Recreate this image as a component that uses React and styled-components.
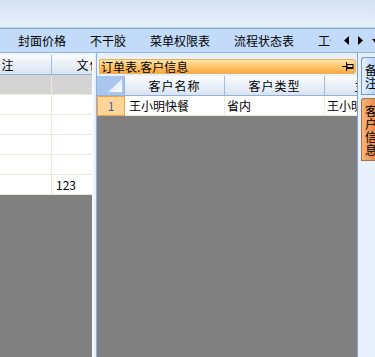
import React from 'react';
import styled, { createGlobalStyle } from 'styled-components';

const GlobalStyle = createGlobalStyle`
  html, body {
    margin: 0;
    padding: 0;
    background: #e8f0fc;
  }
  body {
    font-family: "Noto Sans CJK SC", "Liberation Sans", sans-serif;
    font-size: 12px;
    color: #000;
  }
`;

const Frame = styled.div`
  width: 375px;
  height: 357px;
  overflow: hidden;
  display: flex;
  flex-direction: column;
  background: #e8f0fc;
`;

const TitleArea = styled.div`
  height: 27px;
  flex: none;
  background: linear-gradient(to bottom, #d4e2f3, #e6f0fc);
  border-bottom: 1px solid #b4def0;
`;

const TabBar = styled.div`
  height: 23px;
  flex: none;
  display: flex;
  align-items: center;
  background: #c2dbf9;
  border-top: 1px solid #8ea8c8;
  border-bottom: 1px solid #93b2da;
`;

const TabList = styled.div`
  flex: 1;
  display: flex;
  overflow: hidden;
  white-space: nowrap;
  padding-left: 6px;
  min-width: 0;
`;

const Tab = styled.div`
  flex: none;
  padding: 0 12px;
  line-height: 23px;
`;

const TabArrows = styled.div`
  flex: none;
  width: 44px;
  box-sizing: border-box;
  padding-left: 13px;
  display: flex;
  align-items: center;
  gap: 9px;
`;

const Body = styled.div`
  flex: 1;
  display: flex;
  min-height: 0;
`;

const LeftPane = styled.div`
  width: 92px;
  flex: none;
  padding-top: 1px;
  display: flex;
  flex-direction: column;
  overflow: hidden;
  border-top: 1px solid #f4f8fe;
`;

const GridArea = styled.div`
  flex: 1;
  background: #808080;
  overflow: hidden;
  min-width: 0;
`;

const Row = styled.div`
  display: flex;
  height: 20px;
  margin-left: ${p => p.$shift || 0}px;
`;

const HeadCell = styled.div`
  flex: none;
  box-sizing: border-box;
  width: ${p => p.$w}px;
  height: 100%;
  background: linear-gradient(to bottom, #fbfcfe, #d9e4f2);
  border-right: 1px solid #a3bcdc;
  border-bottom: 1px solid #95b1d8;
  text-align: center;
  line-height: 19px;
  letter-spacing: 1px;
  white-space: nowrap;
  overflow: hidden;
`;

const Cell = styled.div`
  flex: none;
  box-sizing: border-box;
  width: ${p => p.$w}px;
  height: 100%;
  background: ${p => (p.$gray ? '#d4d4d4' : '#ffffff')};
  border-right: 1px solid #ece9d8;
  border-bottom: 1px solid #ece9d8;
  padding-left: ${p => (p.$pad != null ? p.$pad : 4)}px;
  line-height: 19px;
  white-space: nowrap;
  overflow: hidden;
`;

const Splitter = styled.div`
  width: 4px;
  flex: none;
  background: linear-gradient(to right, #ffffff, #e2ebf8);
  border-right: 1px solid #8fb0dc;
`;

const RightPane = styled.div`
  flex: 1;
  min-width: 0;
  display: flex;
  flex-direction: column;
  border-right: 1px solid #7da3d6;
`;

const Caption = styled.div`
  height: 15px;
  flex: none;
  box-sizing: border-box;
  margin: 6px 1px 2px 2px;
  padding-left: 1px;
  display: flex;
  align-items: center;
  justify-content: space-between;
  background: linear-gradient(to bottom, #ffe4a8, #ffc468 55%, #f9a840);
  border: 1px solid #e9b15a;
  border-radius: 0 3px 3px 0;
  line-height: 13px;
  white-space: nowrap;
`;

const Corner = styled.div`
  flex: none;
  box-sizing: border-box;
  width: 28px;
  height: 100%;
  background: #a9c6ee;
  border-right: 1px solid #95b1d8;
  border-bottom: 1px solid #95b1d8;
  display: flex;
  align-items: flex-end;
  justify-content: flex-end;
  padding: 0 2px 3px 0;
`;

const Indicator = styled.div`
  flex: none;
  box-sizing: border-box;
  width: 28px;
  height: 100%;
  background: #ffd69a;
  border: 1px solid #f2a53e;
  color: #3a5ca8;
  text-align: center;
  line-height: 18px;
`;

const SideStrip = styled.div`
  width: 17px;
  flex: none;
  padding: 4px 0 0 3px;
  box-sizing: border-box;
  display: flex;
  flex-direction: column;
  gap: 3px;
  background: #e8f0fc;
`;

const SideTab = styled.div`
  box-sizing: border-box;
  height: ${p => p.$h}px;
  padding-left: 3px;
  display: flex;
  flex-direction: column;
  justify-content: center;
  border: 1px solid ${p => (p.$active ? '#a77247' : '#7298cc')};
  border-right: none;
  border-radius: 3px 0 0 0;
  background: ${p =>
    p.$active
      ? 'linear-gradient(to right, #f6b57a, #e8894a)'
      : 'linear-gradient(to right, #e4f0fe, #b6d3f6)'};
  overflow: hidden;
`;

const SideLabel = styled.span`
  display: block;
  width: 12px;
  font-size: 12px;
  line-height: 13px;
  word-break: break-all;
`;

const Triangle = ({ dir }) => {
  const pts = {
    left: '5,0 5,9 0,4.5',
    right: '0,0 0,9 5,4.5',
    down: '0,0 7,0 3.5,4',
  };
  const w = dir === 'down' ? 7 : 5;
  const h = dir === 'down' ? 4 : 9;
  return (
    <svg width={w} height={h} viewBox={`0 0 ${w} ${h}`} style={{ display: 'block', flex: 'none' }}>
      <polygon points={pts[dir]} fill="#000" />
    </svg>
  );
};

const Pin = () => (
  <svg width="12" height="9" viewBox="0 0 12 9" style={{ display: 'block', marginRight: 1 }}>
    <line x1="0" y1="4.5" x2="4" y2="4.5" stroke="#000" />
    <line x1="4.5" y1="0" x2="4.5" y2="9" stroke="#000" />
    <rect x="5" y="2.5" width="6" height="4" fill="none" stroke="#000" />
    <line x1="5" y1="5.5" x2="11" y2="5.5" stroke="#000" />
  </svg>
);

const CornerMark = () => (
  <svg width="14" height="13" viewBox="0 0 14 13" style={{ display: 'block' }}>
    <defs>
      <linearGradient id="cm" x1="0" y1="0" x2="1" y2="1">
        <stop offset="0" stopColor="#c9dbf4" />
        <stop offset="1" stopColor="#ffffff" />
      </linearGradient>
    </defs>
    <polygon points="14,0 14,13 0,13" fill="url(#cm)" />
  </svg>
);

const tabs = ['封面价格', '不干胶', '菜单权限表', '流程状态表', '工作'];

const leftRows = [
  { a: '', b: '', gray: true },
  { a: '', b: '' },
  { a: '', b: '' },
  { a: '', b: '' },
  { a: '', b: '' },
  { a: '', b: '123' },
];

export default function App() {
  return (
    <Frame>
      <GlobalStyle />
      <TitleArea />
      <TabBar>
        <TabList>
          {tabs.map(t => (
            <Tab key={t}>{t}</Tab>
          ))}
        </TabList>
        <TabArrows>
          <Triangle dir="left" />
          <Triangle dir="right" />
          <Triangle dir="down" />
        </TabArrows>
      </TabBar>
      <Body>
        <LeftPane>
          <GridArea>
            <Row $shift={-48}>
              <HeadCell $w={100}>备注</HeadCell>
              <HeadCell $w={89}>文件名</HeadCell>
            </Row>
            {leftRows.map((r, i) => (
              <Row key={i} $shift={-48}>
                <Cell $w={100} $gray={r.gray}>{r.a}</Cell>
                <Cell $w={89} $gray={r.gray}>{r.b}</Cell>
              </Row>
            ))}
          </GridArea>
        </LeftPane>
        <Splitter />
        <RightPane>
          <Caption>
            <span>订单表.客户信息</span>
            <Pin />
          </Caption>
          <GridArea>
            <Row>
              <Corner>
                <CornerMark />
              </Corner>
              <HeadCell $w={100}>客户名称</HeadCell>
              <HeadCell $w={100}>客户类型</HeadCell>
              <HeadCell $w={112}>主联系人</HeadCell>
            </Row>
            <Row>
              <Indicator>1</Indicator>
              <Cell $w={100}>王小明快餐</Cell>
              <Cell $w={100} $pad={2}>省内</Cell>
              <Cell $w={112} $pad={2}>王小明</Cell>
            </Row>
          </GridArea>
        </RightPane>
        <SideStrip>
          <SideTab $h={38}>
            <SideLabel>备注</SideLabel>
          </SideTab>
          <SideTab $h={63} $active>
            <SideLabel>客户信息</SideLabel>
          </SideTab>
        </SideStrip>
      </Body>
    </Frame>
  );
}
